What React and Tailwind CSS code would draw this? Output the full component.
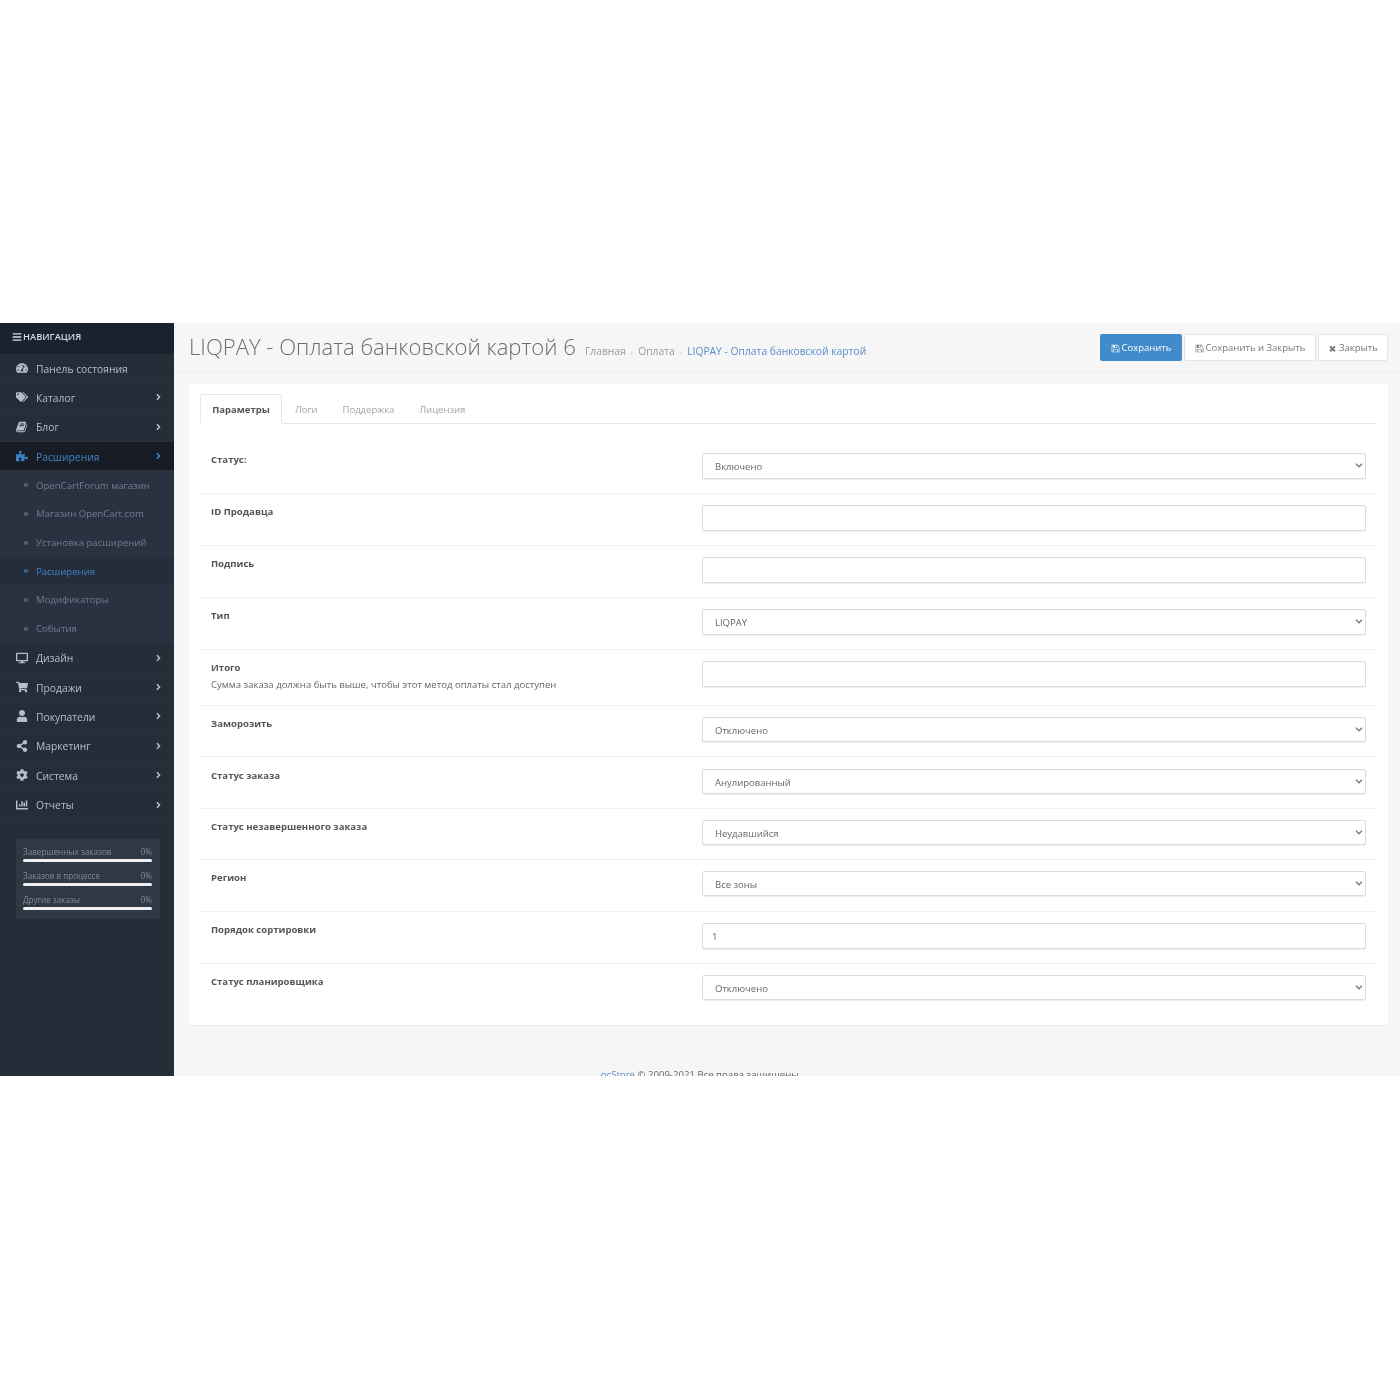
import React from "react";
import { FaBars, FaTachometerAlt, FaTags, FaPuzzlePiece, FaDesktop, FaShoppingCart, FaUser, FaShareAlt, FaCog, FaChartBar, FaAngleRight, FaAngleDoubleRight } from "react-icons/fa";

const Fa4 = ({ d, className }) => (
  <svg viewBox="0 0 1792 1792" fill="currentColor" className={className}><path d={d} /></svg>
);
const bookD = "M1639 478q40 57 18 129l-275 906q-19 64-76.5 107.5t-122.5 43.5h-923q-77 0-148.5-53.5t-99.5-131.5q-24-67-2-127 0-4 3-27t4-37q1-8-3-21.5t-3-19.5q2-11 8-21t16.5-23.5 16.5-23.5q23-38 45-91.5t30-91.5q3-10 .5-30t-.5-28q3-11 17-28t17-23q21-36 42-92t25-90q1-9-2.5-32t.5-28q4-13 22-30.5t22-22.5q19-26 42.5-84.5t27.5-96.5q1-8-3-25.5t-2-26.5q2-8 9-18t18-23 17-21q8-12 16.5-30.5t15-35 16-36 19.5-32 26.5-23.5 36-11.5 47.5 5.5l-1 3q38-9 51-9h761q74 0 114 56t18 130l-274 906q-36 119-71.5 153.5t-128.5 34.5h-869q-27 0-38 15-11 16-1 43 24 70 144 70h923q29 0 56-15.5t35-41.5l300-987q7-22 5-57 38 15 59 43zm-1064 2q-4 13 2 22.5t20 9.5h608q13 0 25.5-9.5t16.5-22.5l21-64q4-13-2-22.5t-20-9.5h-608q-13 0-25.5 9.5t-16.5 22.5zm-83 256q-4 13 2 22.5t20 9.5h608q13 0 25.5-9.5t16.5-22.5l21-64q4-13-2-22.5t-20-9.5h-608q-13 0-25.5 9.5t-16.5 22.5z";
const saveD = "M512 1536h768v-384h-768v384zm896 0h128v-896q0-14-10-38.5t-20-34.5l-281-281q-10-10-34-20t-39-10v416q0 40-28 68t-68 28h-576q-40 0-68-28t-28-68v-416h-128v1280h128v-416q0-40 28-68t68-28h832q40 0 68 28t28 68v416zm-384-928v-320q0-13-9.5-22.5t-22.5-9.5h-192q-13 0-22.5 9.5t-9.5 22.5v320q0 13 9.5 22.5t22.5 9.5h192q13 0 22.5-9.5t9.5-22.5zm640 32v928q0 40-28 68t-68 28h-1344q-40 0-68-28t-28-68v-1344q0-40 28-68t68-28h928q40 0 88 20t76 48l280 280q28 28 48 76t20 88z";
const timesD = "M1490 1322q0 40-28 68l-136 136q-28 28-68 28t-68-28l-294-294-294 294q-28 28-68 28t-68-28l-136-136q-28-28-28-68t28-68l294-294-294-294q-28-28-28-68t28-68l136-136q28-28 68-28t68 28l294 294 294-294q28-28 68-28t68 28l136 136q28 28 28 68t-28 68l-294 294 294 294q28 28 28 68z";
const BookIcon = ({ className }) => <Fa4 d={bookD} className={className} />;

const top = [
  { t: "Панель состояния", I: FaTachometerAlt, h: "h-[29px]" },
  { t: "Каталог", I: FaTags, arrow: true, h: "h-[29px]" },
  { t: "Блог", I: BookIcon, arrow: true, h: "h-[30px]" },
];
const sub = [
  ["OpenCartForum магазин", "h-[28px]"],
  ["Магазин OpenCart.com", "h-[29px]"],
  ["Установка расширений", "h-[29px]"],
  ["Расширения", "h-[28px]", true],
  ["Модификаторы", "h-[29px]"],
  ["События", "h-[29px]"],
];
const bottom = [
  { t: "Дизайн", I: FaDesktop, h: "h-[30px]" },
  { t: "Продажи", I: FaShoppingCart, h: "h-[29px]" },
  { t: "Покупатели", I: FaUser, h: "h-[29px]" },
  { t: "Маркетинг", I: FaShareAlt, h: "h-[30px]" },
  { t: "Система", I: FaCog, h: "h-[29px]" },
  { t: "Отчеты", I: FaChartBar, h: "h-[30px]" },
];

function MenuItem({ t, I, arrow, h, active }) {
  return (
    <div className={`flex items-center border-b border-[#2a323e] pl-[16px] pr-[12px] text-[10.3px] ${h} ${active ? "bg-[#181d25] text-[#3d84c6]" : "text-[#b4bfcd]"}`}>
      <span className="flex w-[20px] shrink-0 items-center"><I className="h-[12px] w-[12px]" /></span>
      <span className="flex-1 pt-[3px]">{t}</span>
      {arrow && <FaAngleRight className="h-[10px] w-[7px]" />}
    </div>
  );
}

const rows = [
  { l: "Статус:", s: "Включено", pb: "pb-[14px]", pt: "pt-[11px]", fh: "h-[26px]" },
  { l: "ID Продавца", pb: "pb-[14px]", pt: "pt-[11px]", fh: "h-[26px]" },
  { l: "Подпись", pb: "pb-[14px]", pt: "pt-[11px]", fh: "h-[26px]" },
  { l: "Тип", s: "LIQPAY", pb: "pb-[14px]", pt: "pt-[11px]", fh: "h-[26px]" },
  { l: "Итого", help: "Сумма заказа должна быть выше, чтобы этот метод оплаты стал доступен", pb: "pb-[13px]", pt: "pt-[11px]", fh: "h-[26px]" },
  { l: "Заморозить", s: "Отключено", pb: "pb-[14px]", pt: "pt-[11px]", fh: "h-[25px]" },
  { l: "Статус заказа", s: "Анулированный", pb: "pb-[14px]", pt: "pt-[12px]", fh: "h-[25px]" },
  { l: "Статус незавершенного заказа", s: "Неудавшийся", pb: "pb-[14px]", pt: "pt-[11px]", fh: "h-[25px]" },
  { l: "Регион", s: "Все зоны", pb: "pb-[15px]", pt: "pt-[11px]", fh: "h-[25px]" },
  { l: "Порядок сортировки", v: "1", pb: "pb-[14px]", pt: "pt-[11px]", fh: "h-[26px]" },
  { l: "Статус планировщика", s: "Отключено", pb: "pb-[25px]", pt: "pt-[11px]", fh: "h-[25px]", last: true },
];

function Stat({ t }) {
  return (
    <div className="mb-[8px]">
      <div className="flex justify-between text-[8.1px] leading-[12px] text-[#7f8a98]"><span>{t}</span><span>0%</span></div>
      <div className="mt-[1px] h-[3px] rounded-full bg-[#f0f0f0]" />
    </div>
  );
}

export default function App() {
  return (
    <div className="h-[1400px] bg-white pt-[323px] font-['Open_Sans',sans-serif] blur-[0.4px]">
      <div className="flex h-[753px] overflow-hidden bg-[#f6f6f6]">
        <aside className="w-[174px] shrink-0 bg-[#252d38]">
          <div className="flex h-[31px] items-center gap-[1px] bg-[#1a2230] pb-[3px] pl-[12px] text-[9.3px] font-semibold text-[#d5dbe4]">
            <FaBars className="h-[10px] w-[10px]" />
            <span>НАВИГАЦИЯ</span>
          </div>
          {top.map((m) => <MenuItem key={m.t} {...m} />)}
          <MenuItem t="Расширения" I={FaPuzzlePiece} arrow active h="h-[29px]" />
          <div className="bg-[#2a3242]">
            {sub.map(([t, h, a]) => (
              <div key={t} className={`flex items-center pl-[23px] text-[9.6px] ${h} ${a ? "bg-[#252d3a] text-[#3d84c6]" : "text-[#717c8c]"}`}>
                <FaAngleDoubleRight className="mr-[7px] h-[6px] w-[6px]" />
                <span className="pt-[2px]">{t}</span>
              </div>
            ))}
          </div>
          {bottom.map((m) => <MenuItem key={m.t} {...m} arrow />)}
          <div className="ml-[16px] mr-[14px] mt-[19px] h-[80px] rounded-[2px] bg-[#2f3945] pl-[7px] pr-[8px] pt-[7px]">
            <Stat t="Завершенных заказов" />
            <Stat t="Заказов в процессе" />
            <Stat t="Другие заказы" />
          </div>
        </aside>
        <main className="min-w-0 flex-1">
          <header className="flex h-[50px] items-center border-b border-[#ebebeb] pl-[15px] pr-[12px]">
            <h1 className="pb-[4px] text-[22.1px] font-light leading-[44px] text-[#6d6d6d]">LIQPAY - Оплата банковской картой 6</h1>
            <div className="ml-[9px] flex items-center pt-[8px] text-[10.3px] text-[#9a9a9a]">
              <span>Главная</span>
              <span className="mx-[5px] text-[8px] text-[#c5c5c5]">›</span>
              <span>Оплата</span>
              <span className="mx-[5px] text-[8px] text-[#c5c5c5]">›</span>
              <span className="text-[#5b8ec9]">LIQPAY - Оплата банковской картой</span>
            </div>
            <div className="ml-auto flex h-[27px] gap-[2px] text-[9.5px]">
              <button className="flex w-[82px] items-center justify-center gap-[2px] rounded-[2px] bg-[#428bca] pt-[1px] text-white"><Fa4 d={saveD} className="h-[9px] w-[9px]" />Сохранить</button>
              <button className="flex w-[132px] items-center justify-center gap-[2px] rounded-[2px] border border-[#e4e4e4] bg-white pt-[1px] text-[#777]"><Fa4 d={saveD} className="h-[9px] w-[9px]" />Сохранить и Закрыть</button>
              <button className="flex w-[70px] items-center justify-center gap-[2px] rounded-[2px] border border-[#e4e4e4] bg-white pt-[1px] text-[#777]"><Fa4 d={timesD} className="h-[9px] w-[9px]" />Закрыть</button>
            </div>
          </header>
          <section className="ml-[15px] mr-[12px] mt-[11px] bg-white px-[11px] pt-[10px] shadow-[0_1px_1px_rgba(0,0,0,0.03)]">
            <div className="flex h-[30px] border-b border-[#e6e6e6] text-[9.5px] text-[#a5a5a5]">
              <div className="flex h-[30px] w-[82px] items-center justify-center rounded-t-[2px] border border-b-white border-[#e6e6e6] bg-white pt-[2px] font-bold text-[#555]">Параметры</div>
              <div className="ml-[13px] flex items-center pt-[3px]">Логи</div>
              <div className="ml-[25px] flex items-center pt-[3px]">Поддержка</div>
              <div className="ml-[25px] flex items-center pt-[3px]">Лицензия</div>
            </div>
            <div className="mt-[18px]">
              {rows.map((r) => (
                <div key={r.l} className={`flex ${r.pt} ${r.pb} ${r.last ? "" : "border-b border-[#f0f0f0]"}`}>
                  <div className="w-[502px] shrink-0 pl-[11px] text-[9.55px] text-[#555]">
                    <div className="font-bold leading-[14px]">{r.l}</div>
                    {r.help && <div className="mt-[3px] leading-[14px] text-[#666]">{r.help}</div>}
                  </div>
                  <div className="relative mr-[11px] flex-1">
                    {r.s ? (
                      <>
                        <select defaultValue={r.s} className={`block w-full appearance-none rounded-[2px] border border-[#dcdcdc] bg-white pl-[12px] pt-[3px] text-[9.5px] text-[#666] shadow-[0_1px_1px_rgba(0,0,0,0.07)] ${r.fh}`}>
                          <option>{r.s}</option>
                        </select>
                        <svg viewBox="0 0 8 5" className="pointer-events-none absolute right-[3px] top-[10px] h-[5px] w-[8px]" fill="none" stroke="#777" strokeWidth="1.3"><path d="M1 .8 4 3.8 7 .8" /></svg>
                      </>
                    ) : (
                      <input defaultValue={r.v || ""} className={`block w-full rounded-[2px] border border-[#dcdcdc] bg-white pl-[9px] text-[9.5px] text-[#666] shadow-[0_1px_1px_rgba(0,0,0,0.07)] ${r.fh}`} />
                    )}
                  </div>
                </div>
              ))}
            </div>
          </section>
          <footer className="mt-[43px] pr-[172px] text-center text-[9.6px] leading-[14px] text-[#666]">
            <span className="text-[#5b8ec9]">ocStore</span> © 2009-2021 Все права защищены.
          </footer>
        </main>
      </div>
    </div>
  );
}
